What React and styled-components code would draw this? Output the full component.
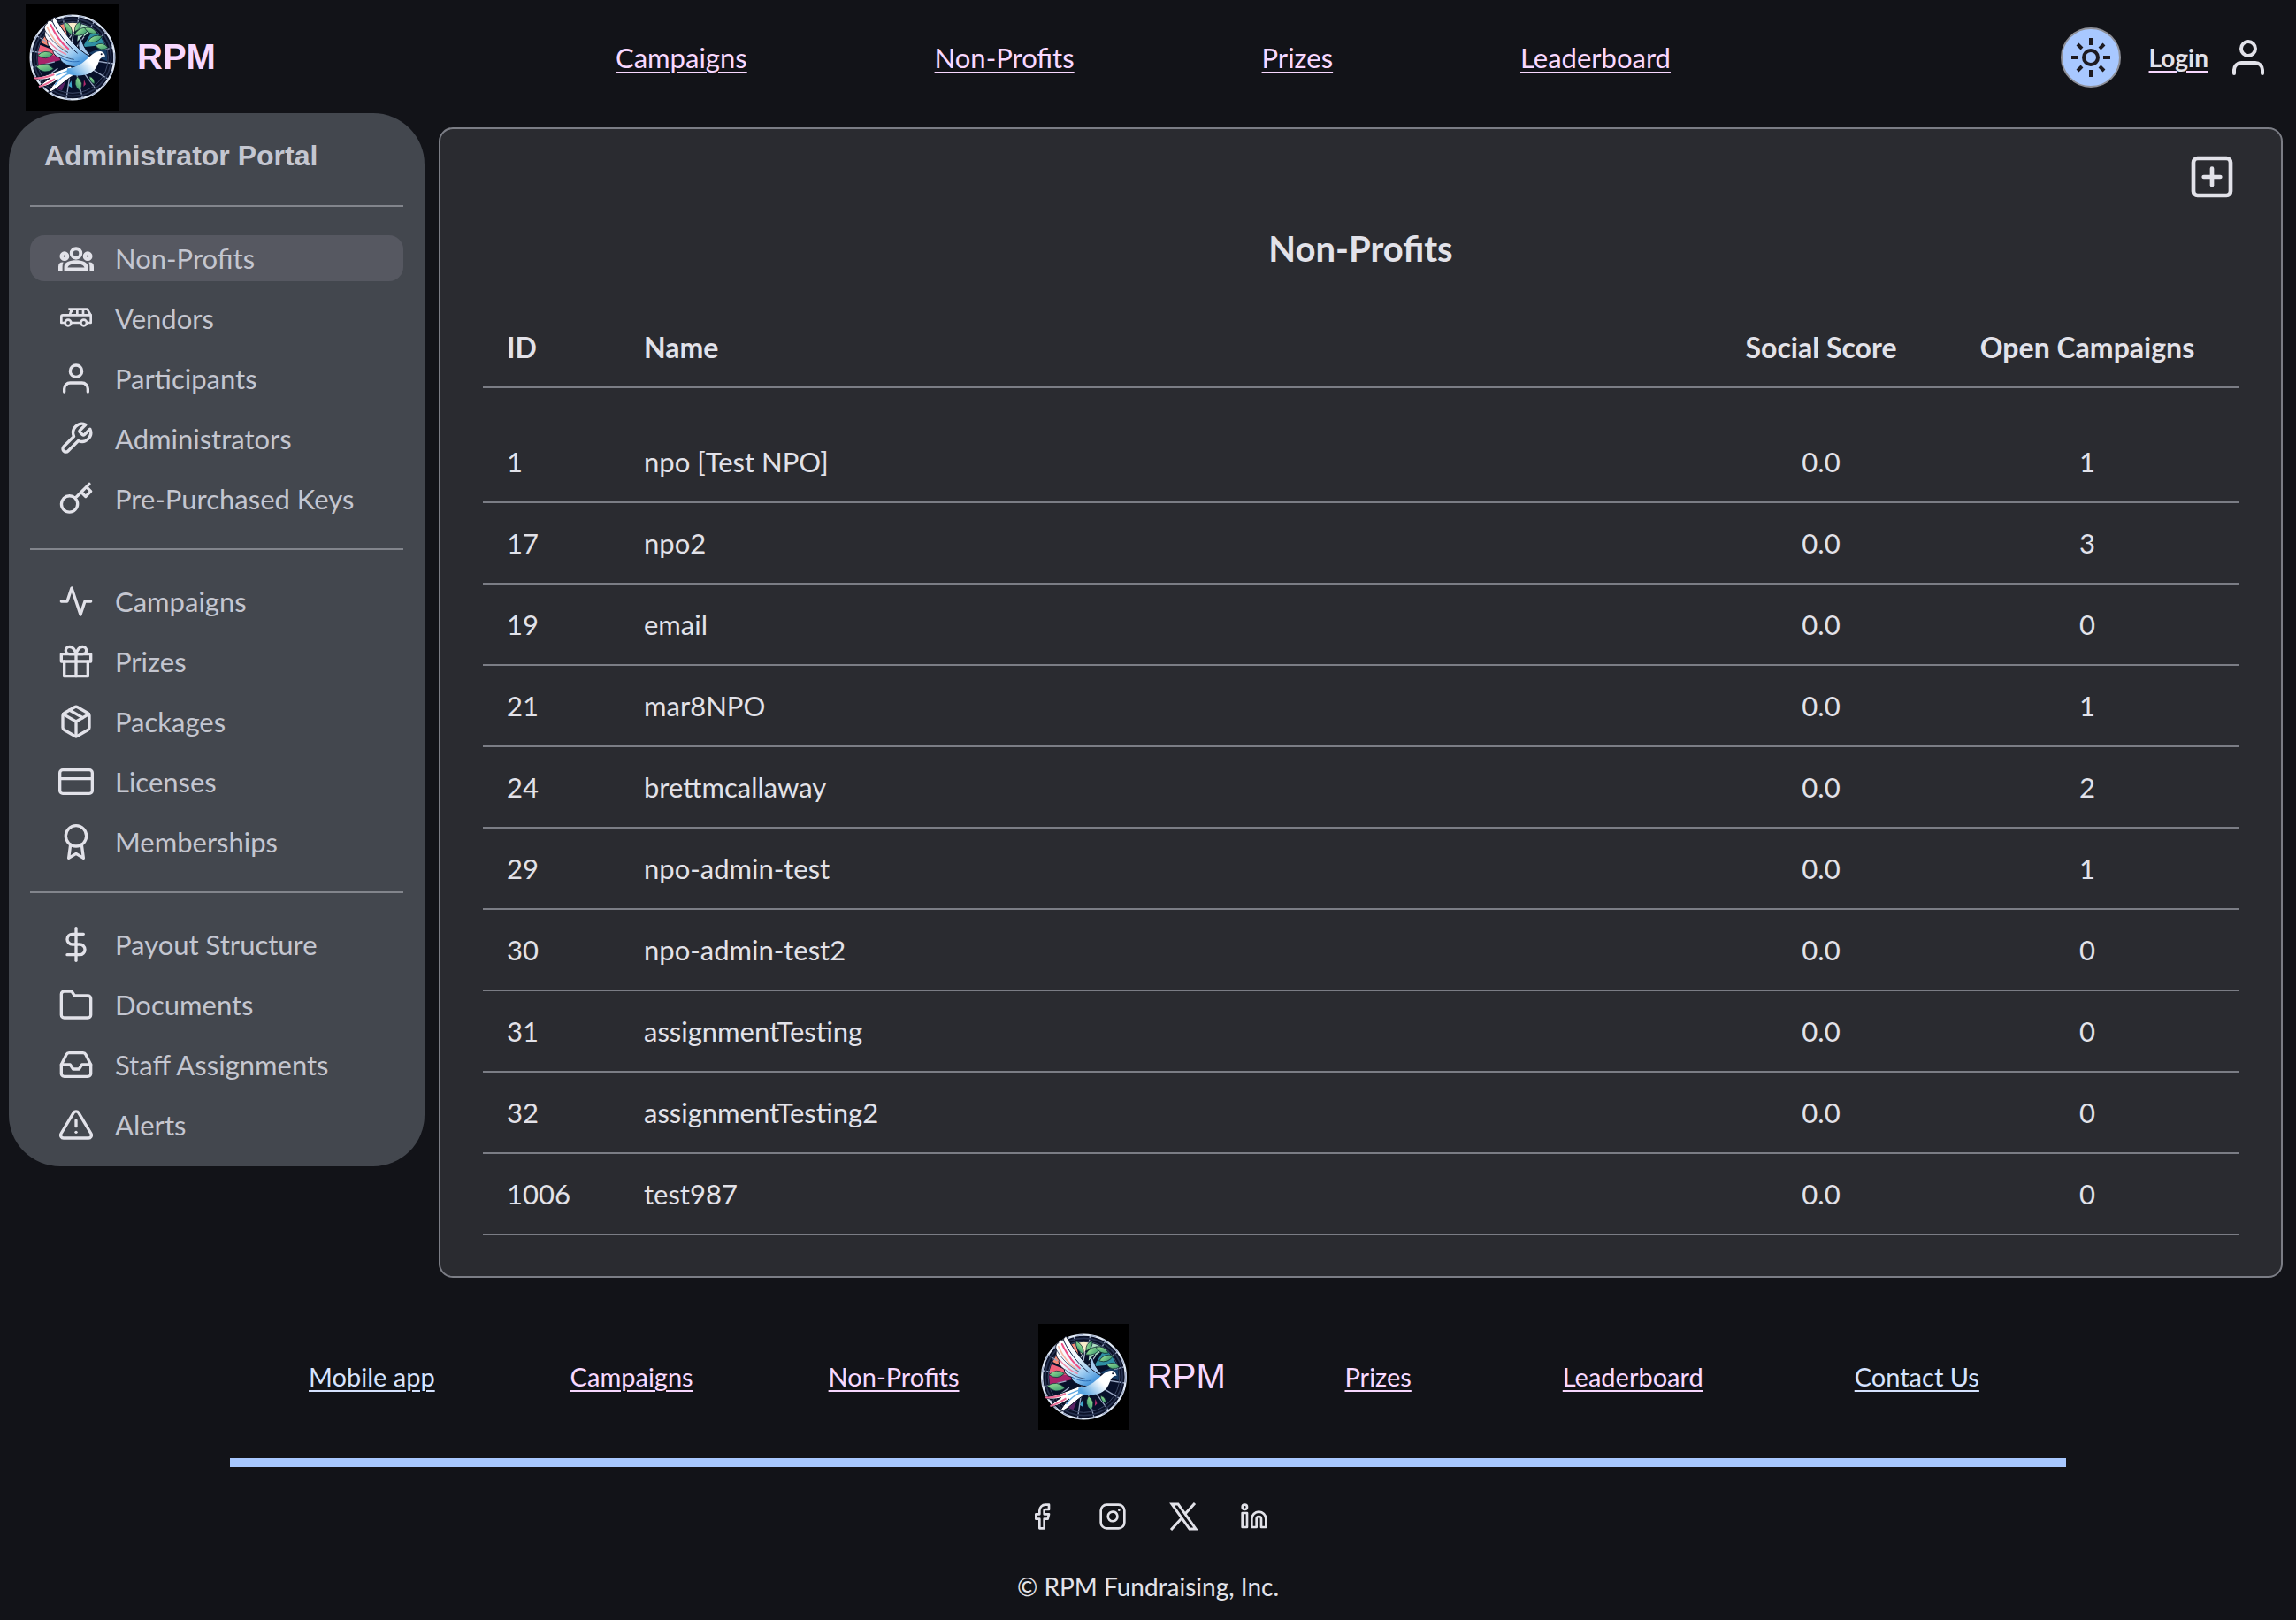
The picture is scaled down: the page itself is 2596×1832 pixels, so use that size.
import React from "react";
import styled, { createGlobalStyle, css } from "styled-components";
import {
  FiActivity,
  FiAlertTriangle,
  FiAward,
  FiCreditCard,
  FiDollarSign,
  FiFacebook,
  FiFolder,
  FiGift,
  FiInbox,
  FiInstagram,
  FiKey,
  FiLinkedin,
  FiPackage,
  FiPlusSquare,
  FiTool,
  FiUser,
} from "react-icons/fi";

const color = {
  page: "#121318",
  card: "#2a2b30",
  panel: "#43474e",
  selected: "#565861",
  line: "#7b7d85",
  text: "#e2e2e9",
  muted: "#c4c6d0",
  pink: "#f8d8ff",
  sky: "#d6e3ff",
  blue: "#a8c8ff",
  ink: "#1e1b20",
};

const brandFont = `"Liberation Sans", Arial, sans-serif`;

const GlobalStyle = createGlobalStyle`
  * { box-sizing: border-box; }
  body {
    margin: 0;
    background: ${color.page};
    color: ${color.text};
    font-family: Lato, "Open Sans", sans-serif;
    font-size: 31px;
    line-height: 40px;
  }
  svg { display: block; flex: none; }
`;

const Header = styled.header`
  display: grid;
  grid-template-columns: 667fr 1193fr 677fr;
  align-items: center;
  height: 128px;
  padding: 2px 30px 0 29px;
`;

const Brand = styled.div`
  display: flex;
  align-items: center;
  gap: 20px;
  color: ${color.pink};
  font-family: ${brandFont};
  font-size: 40px;
  line-height: 48px;
  font-weight: ${(p) => (p.$bold ? 700 : 400)};
`;

const BrandName = styled.span`
  padding-bottom: 3px;
`;

const TopNav = styled.nav`
  display: flex;
  justify-content: space-between;
`;

const TextLink = styled.a`
  color: ${(p) => (p.$sky ? color.sky : color.pink)};
  font-size: ${(p) => (p.$small ? 29 : 31)}px;
  text-decoration: underline;
  text-decoration-thickness: 2px;
  text-underline-offset: 4px;
  white-space: nowrap;
`;

const Account = styled.div`
  display: flex;
  align-items: center;
  justify-content: flex-end;
  gap: 21px;
`;

const ThemeButton = styled.button`
  display: grid;
  place-items: center;
  width: 68px;
  height: 68px;
  margin: 0 11px 0 0;
  padding: 0;
  border: 2px solid #8e9099;
  border-radius: 50%;
  background: ${color.blue};
  color: ${color.ink};
  cursor: pointer;
`;

const LoginLink = styled.a`
  color: ${color.text};
  font-size: 28px;
  font-weight: 700;
  text-decoration: underline ${color.pink} 2px;
  text-underline-offset: 4px;
`;

const IconButton = styled.button`
  display: block;
  padding: 0;
  border: 0;
  background: none;
  color: ${color.text};
  cursor: pointer;
`;

const Main = styled.main`
  display: flex;
  align-items: flex-start;
  gap: 16px;
  padding: 0 15px 0 10px;
`;

const Sidebar = styled.aside`
  flex: 0 0 470px;
  padding: 28px 24px 21px;
  border-radius: 58px;
  background: ${color.panel};
  color: ${color.muted};
`;

const PortalTitle = styled.h2`
  margin: 0 0 36px;
  padding: 0 16px;
  font-family: ${brandFont};
  font-size: 32px;
  line-height: 40px;
`;

const MenuGroup = styled.ul`
  display: flex;
  flex-direction: column;
  gap: 16px;
  margin: 0;
  padding: 32px 0 0;
  list-style: none;
  border-top: 2px solid #82858c;

  & + & {
    margin-top: 30px;
  }
`;

const MenuLink = styled.a`
  display: flex;
  align-items: center;
  gap: 24px;
  height: 52px;
  padding: 0 32px;
  border-radius: 16px;
  background: ${(p) => (p.$selected ? color.selected : "transparent")};
  color: inherit;
  text-decoration: none;

  svg {
    width: 40px;
    height: 40px;
    color: ${color.text};
  }
`;

const Card = styled.section`
  flex: 1;
  margin-top: 16px;
  padding: 26px 48px 46px;
  border: 2px solid ${color.line};
  border-radius: 16px;
  background: ${color.card};
`;

const CardActions = styled.div`
  display: flex;
  justify-content: flex-end;
  padding-right: 2px;
`;

const CardTitle = styled.h1`
  margin: 27px 0 42px;
  font-size: 40px;
  line-height: 52px;
  text-align: center;
`;

const Table = styled.table`
  width: 100%;
  border-collapse: separate;
  border-spacing: 0;
  table-layout: fixed;

  tbody tr:first-child td {
    padding-top: 63px;
  }
`;

const Column = styled.col`
  width: ${(p) => p.$width};
`;

const cell = css`
  border-bottom: 2px solid ${color.line};
  text-align: ${(p) => (p.$center ? "center" : "left")};
`;

const HeadCell = styled.th`
  ${cell}
  padding: 24px 27px;
  font-size: 32px;
`;

const Cell = styled.td`
  ${cell}
  padding: 25px 27px;
`;

const Footer = styled.footer`
  display: flex;
  flex-direction: column;
  align-items: center;
  padding: 52px 0 18px;
`;

const FooterNav = styled.nav`
  display: grid;
  grid-template-columns: 1fr 274px 1fr;
  align-items: center;
  width: 80%;
  padding: 0 13px 32px;
  border-bottom: 10px solid ${color.blue};
`;

const LinkGroup = styled.div`
  display: flex;
  justify-content: space-around;
`;

const FooterBrand = styled.div`
  padding-left: 13px;
`;

const Socials = styled.div`
  display: flex;
  gap: 48px;
  padding: 40px 0 43px;

  a {
    color: ${color.text};
  }
`;

const Copyright = styled.p`
  margin: 0;
  font-size: 28px;
`;

const LEAVES = [
  [232, 96, 26, 9, 60],
  [264, 90, 20, 8, -60],
  [278, 107, 30, 11, -25],
  [308, 104, 24, 9, 25],
  [322, 132, 26, 10, -20],
  [345, 158, 22, 10, 10],
  [154, 186, 26, 11, -5],
  [152, 230, 30, 13, 8],
  [266, 284, 24, 11, 80],
  [312, 272, 16, 6, 55],
];

const SPOKES = Array.from({ length: 16 }, (_, i) => (i * Math.PI) / 8 + 0.15);

function Logo({ width, id }) {
  return (
    <svg
      width={width}
      height="120"
      viewBox="87 15 318 360"
      preserveAspectRatio="xMidYMid slice"
      role="img"
      aria-label="Dove over a wheel"
    >
      <defs>
        <linearGradient id={`${id}-wing`} gradientUnits="userSpaceOnUse" x1="170" y1="70" x2="270" y2="215">
          <stop offset="0" stopColor="#fff" />
          <stop offset="0.45" stopColor="#f2f7fd" />
          <stop offset="0.75" stopColor="#9fcdf2" />
          <stop offset="1" stopColor="#4a97dc" />
        </linearGradient>
        <linearGradient id={`${id}-body`} gradientUnits="userSpaceOnUse" x1="320" y1="185" x2="250" y2="255">
          <stop offset="0.3" stopColor="#fff" />
          <stop offset="1" stopColor="#58a5e2" />
        </linearGradient>
        <linearGradient id={`${id}-leaf`} x1="0" y1="0" x2="1" y2="1">
          <stop offset="0" stopColor="#a4ea9a" />
          <stop offset="1" stopColor="#2f8f6a" />
        </linearGradient>
        <clipPath id={`${id}-wheel`}>
          <circle cx="246" cy="195" r="118" />
        </clipPath>
      </defs>
      <rect x="80" y="10" width="332" height="370" fill="#000" />
      <circle cx="246" cy="195" r="143" fill="#0a1128" />
      <g clipPath={`url(#${id}-wheel)`}>
        <rect x="120" y="70" width="260" height="260" fill="#07102a" />
        <path d="M246 195 L110 130 L170 60 L215 70Z" fill="#f58a78" />
        <path d="M240 130 L215 60 L270 70Z" fill="#f8eccb" />
        <path d="M262 140 L270 60 L330 90Z" fill="#a9dcc0" />
        <path d="M280 160 L325 85 L380 150Z" fill="#2f8fa3" />
        <path d="M300 180 L375 150 L380 215Z" fill="#163c66" />
        <path d="M246 195 L105 140 L115 185Z" fill="#f0607a" />
        <path d="M246 195 L110 180 L115 225Z" fill="#a8246a" />
        <path d="M190 290 L225 270 L205 320Z" fill="#5b2266" />
        <path d="M232 290 l10 -16 l2 24z" fill="#3fa7cc" />
        <path d="M285 270 l6 16 l-8 8z" fill="#b02a6b" />
        <path d="M205 150 L245 110 L255 150 L285 115 L270 190Z" fill="#0a1128" />
        <path d="M240 165 L250 110 M252 170 L285 125 M225 145 L243 118" stroke="#aebacd" strokeWidth="4" />
      </g>
      <g stroke="#9aa8c4" strokeWidth="4">
        {SPOKES.map((angle) => {
          const start = Math.sin(angle) > 0 ? 62 : 106;
          return (
            <line
              key={angle}
              x1={246 + start * Math.cos(angle)}
              y1={195 + start * Math.sin(angle)}
              x2={246 + 140 * Math.cos(angle)}
              y2={195 + 140 * Math.sin(angle)}
            />
          );
        })}
      </g>
      <circle cx="246" cy="195" r="121" fill="none" stroke="#3c4968" strokeWidth="3" />
      <circle cx="246" cy="195" r="131" fill="none" stroke="#27324f" strokeWidth="5" />
      <circle cx="246" cy="195" r="142" fill="none" stroke="#dfe8f5" strokeWidth="7" />
      <circle cx="246" cy="195" r="142" fill="none" stroke="#9dabc8" strokeWidth="4" strokeDasharray="20 26" />
      {LEAVES.map(([x, y, rx, ry, turn]) => (
        <path
          key={`${x}-${y}`}
          d={`M${x - rx} ${y} Q${x} ${y - ry * 2} ${x + rx} ${y} Q${x} ${y + ry * 2} ${x - rx} ${y}Z`}
          transform={`rotate(${turn} ${x} ${y})`}
          fill={`url(#${id}-leaf)`}
          stroke="#0a1f2c"
          strokeWidth="2"
        />
      ))}
      <path d="M274 128 C260 150 266 178 290 196 L306 186 C290 170 280 150 274 128Z" fill="#a5c9ee" stroke="#0a1128" strokeWidth="3" />
      <path d="M240 224 C200 238 150 262 114 264 C124 272 150 272 168 266 C150 278 138 288 130 294 C152 298 178 282 196 270 C184 284 170 300 164 314 C194 306 216 272 256 252Z" fill="#fff" stroke="#0a1128" strokeWidth="3" />
      <path d="M116 265 C140 267 160 262 184 252 M132 294 C152 288 170 278 186 268" stroke="#ee6f98" strokeWidth="6" fill="none" />
      <path d="M186 288 C200 268 220 252 244 246 M190 256 L234 238" stroke="#64abe4" strokeWidth="4" fill="none" />
      <path
        d="M306 192 C262 170 222 120 186 58 C178 60 176 66 178 74 C168 66 160 70 160 80 C150 84 148 96 154 106 C148 116 154 130 162 138 C158 150 168 162 180 170 C178 182 190 192 204 196 C204 210 220 218 236 224 C262 232 290 222 306 192Z"
        fill={`url(#${id}-wing)`}
        stroke="#0a1128"
        strokeWidth="3"
      />
      <g fill="none" strokeLinecap="round">
        <path d="M178 74 C200 118 232 156 262 180" stroke="#10224a" strokeWidth="3" />
        <path d="M172 84 C188 118 208 146 232 166" stroke="#ee4f86" strokeWidth="6" />
        <path d="M160 92 C174 126 196 152 222 170" stroke="#f7b8a8" strokeWidth="5" />
        <path d="M155 107 C174 138 198 160 230 178" stroke="#10224a" strokeWidth="2" />
        <path d="M164 138 C180 158 200 174 224 184" stroke="#f08aa8" strokeWidth="4" />
        <path d="M182 170 C202 188 226 198 250 202" stroke="#10224a" strokeWidth="2" />
        <path d="M206 196 C226 208 246 212 268 208" stroke="#2d6fb8" strokeWidth="3" />
      </g>
      <path
        d="M228 232 C258 232 284 212 300 196 C312 186 322 174 338 174 C350 174 355 182 357 192 C350 190 344 196 338 202 C332 218 326 240 302 250 C280 259 244 258 226 248Z"
        fill={`url(#${id}-body)`}
      />
      <circle cx="344" cy="184" r="3" fill="#0a1128" />
    </svg>
  );
}

function SunIcon() {
  return (
    <svg width="44" height="44" viewBox="2 2 44 44" fill="none" stroke="currentColor" strokeWidth="4">
      <circle cx="24" cy="24" r="8" />
      <path d="M24 2v8M24 38v8M2 24h8M38 24h8M9 9l5 5M34 34l5 5M39 9l-5 5M14 34l-5 5" />
    </svg>
  );
}

function GroupIcon() {
  return (
    <svg viewBox="196 812 122 122" fill="currentColor">
      <g fill="none" stroke="currentColor">
        <circle cx="257" cy="856" r="16" strokeWidth="12" />
        <circle cx="217" cy="866" r="10" strokeWidth="13" />
        <circle cx="297" cy="866" r="10" strokeWidth="13" />
      </g>
      <path
        fillRule="evenodd"
        d="M216 918V903C216 886 236 880 257 880S298 886 298 903V918ZM228 905H286C283 895 270 892 257 892S231 895 228 905Z"
      />
      <path d="M196 918V902Q196 886 213 887Q210 894 210 903V918ZM318 918V902Q318 886 301 887Q304 894 304 903V918Z" />
    </svg>
  );
}

function VanIcon() {
  return (
    <svg viewBox="197 362 120 120" fill="none" stroke="currentColor" strokeWidth="8" strokeLinejoin="round">
      <path d="M218 437H207V416Q207 411 212 411H307V437H295M242 437H271" />
      <path d="M231 391H295L307 411M241 392L236 410M261 391V411M281 391V411M238 403L246 391" />
      <circle cx="230" cy="437" r="10" />
      <circle cx="283" cy="437" r="10" />
    </svg>
  );
}

function XIcon() {
  return (
    <svg width="32" height="32" viewBox="0 0 32 32" fill="none" stroke="currentColor" strokeWidth="3">
      <path d="M3 2H10L30 30H23Z" />
      <path d="M29 1L18 13M2 31L14 18" />
    </svg>
  );
}

const MENU = [
  [
    ["Non-Profits", GroupIcon],
    ["Vendors", VanIcon],
    ["Participants", FiUser],
    ["Administrators", FiTool],
    ["Pre-Purchased Keys", FiKey],
  ],
  [
    ["Campaigns", FiActivity],
    ["Prizes", FiGift],
    ["Packages", FiPackage],
    ["Licenses", FiCreditCard],
    ["Memberships", FiAward],
  ],
  [
    ["Payout Structure", FiDollarSign],
    ["Documents", FiFolder],
    ["Staff Assignments", FiInbox],
    ["Alerts", FiAlertTriangle],
  ],
];

const ROWS = [
  [1, "npo [Test NPO]", 1],
  [17, "npo2", 3],
  [19, "email", 0],
  [21, "mar8NPO", 1],
  [24, "brettmcallaway", 2],
  [29, "npo-admin-test", 1],
  [30, "npo-admin-test2", 0],
  [31, "assignmentTesting", 0],
  [32, "assignmentTesting2", 0],
  [1006, "test987", 0],
];

const SOCIALS = [
  ["Facebook", FiFacebook],
  ["Instagram", FiInstagram],
  ["X", XIcon],
  ["LinkedIn", FiLinkedin],
];

export default function App() {
  return (
    <>
      <GlobalStyle />
      <Header>
        <Brand $bold>
          <Logo width="106" id="top" />
          <BrandName>RPM</BrandName>
        </Brand>
        <TopNav>
          {["Campaigns", "Non-Profits", "Prizes", "Leaderboard"].map((name) => (
            <TextLink key={name} href="#">
              {name}
            </TextLink>
          ))}
        </TopNav>
        <Account>
          <ThemeButton aria-label="Switch theme">
            <SunIcon />
          </ThemeButton>
          <LoginLink href="#">Login</LoginLink>
          <IconButton aria-label="Account">
            <FiUser size={48} />
          </IconButton>
        </Account>
      </Header>

      <Main>
        <Sidebar>
          <PortalTitle>Administrator Portal</PortalTitle>
          {MENU.map((group, index) => (
            <MenuGroup key={index}>
              {group.map(([name, Icon]) => (
                <li key={name}>
                  <MenuLink href="#" $selected={name === "Non-Profits"}>
                    <Icon />
                    {name}
                  </MenuLink>
                </li>
              ))}
            </MenuGroup>
          ))}
        </Sidebar>

        <Card>
          <CardActions>
            <IconButton aria-label="Add non-profit">
              <FiPlusSquare size={56} />
            </IconButton>
          </CardActions>
          <CardTitle>Non-Profits</CardTitle>
          <Table>
            <colgroup>
              <Column $width="155px" />
              <Column $width="auto" />
              <Column $width="260px" />
              <Column $width="342px" />
            </colgroup>
            <thead>
              <tr>
                <HeadCell>ID</HeadCell>
                <HeadCell>Name</HeadCell>
                <HeadCell $center>Social Score</HeadCell>
                <HeadCell $center>Open Campaigns</HeadCell>
              </tr>
            </thead>
            <tbody>
              {ROWS.map(([id, name, open]) => (
                <tr key={id}>
                  <Cell>{id}</Cell>
                  <Cell>{name}</Cell>
                  <Cell $center>0.0</Cell>
                  <Cell $center>{open}</Cell>
                </tr>
              ))}
            </tbody>
          </Table>
        </Card>
      </Main>

      <Footer>
        <FooterNav>
          <LinkGroup>
            <TextLink $small $sky href="#">Mobile app</TextLink>
            <TextLink $small href="#">Campaigns</TextLink>
            <TextLink $small href="#">Non-Profits</TextLink>
          </LinkGroup>
          <FooterBrand>
            <Brand>
              <Logo width="103" id="bottom" />
              <BrandName>RPM</BrandName>
            </Brand>
          </FooterBrand>
          <LinkGroup>
            <TextLink $small href="#">Prizes</TextLink>
            <TextLink $small href="#">Leaderboard</TextLink>
            <TextLink $small $sky href="#">Contact Us</TextLink>
          </LinkGroup>
        </FooterNav>
        <Socials>
          {SOCIALS.map(([name, Icon]) => (
            <a key={name} href="#" aria-label={name}>
              <Icon size={32} />
            </a>
          ))}
        </Socials>
        <Copyright>© RPM Fundraising, Inc.</Copyright>
      </Footer>
    </>
  );
}
